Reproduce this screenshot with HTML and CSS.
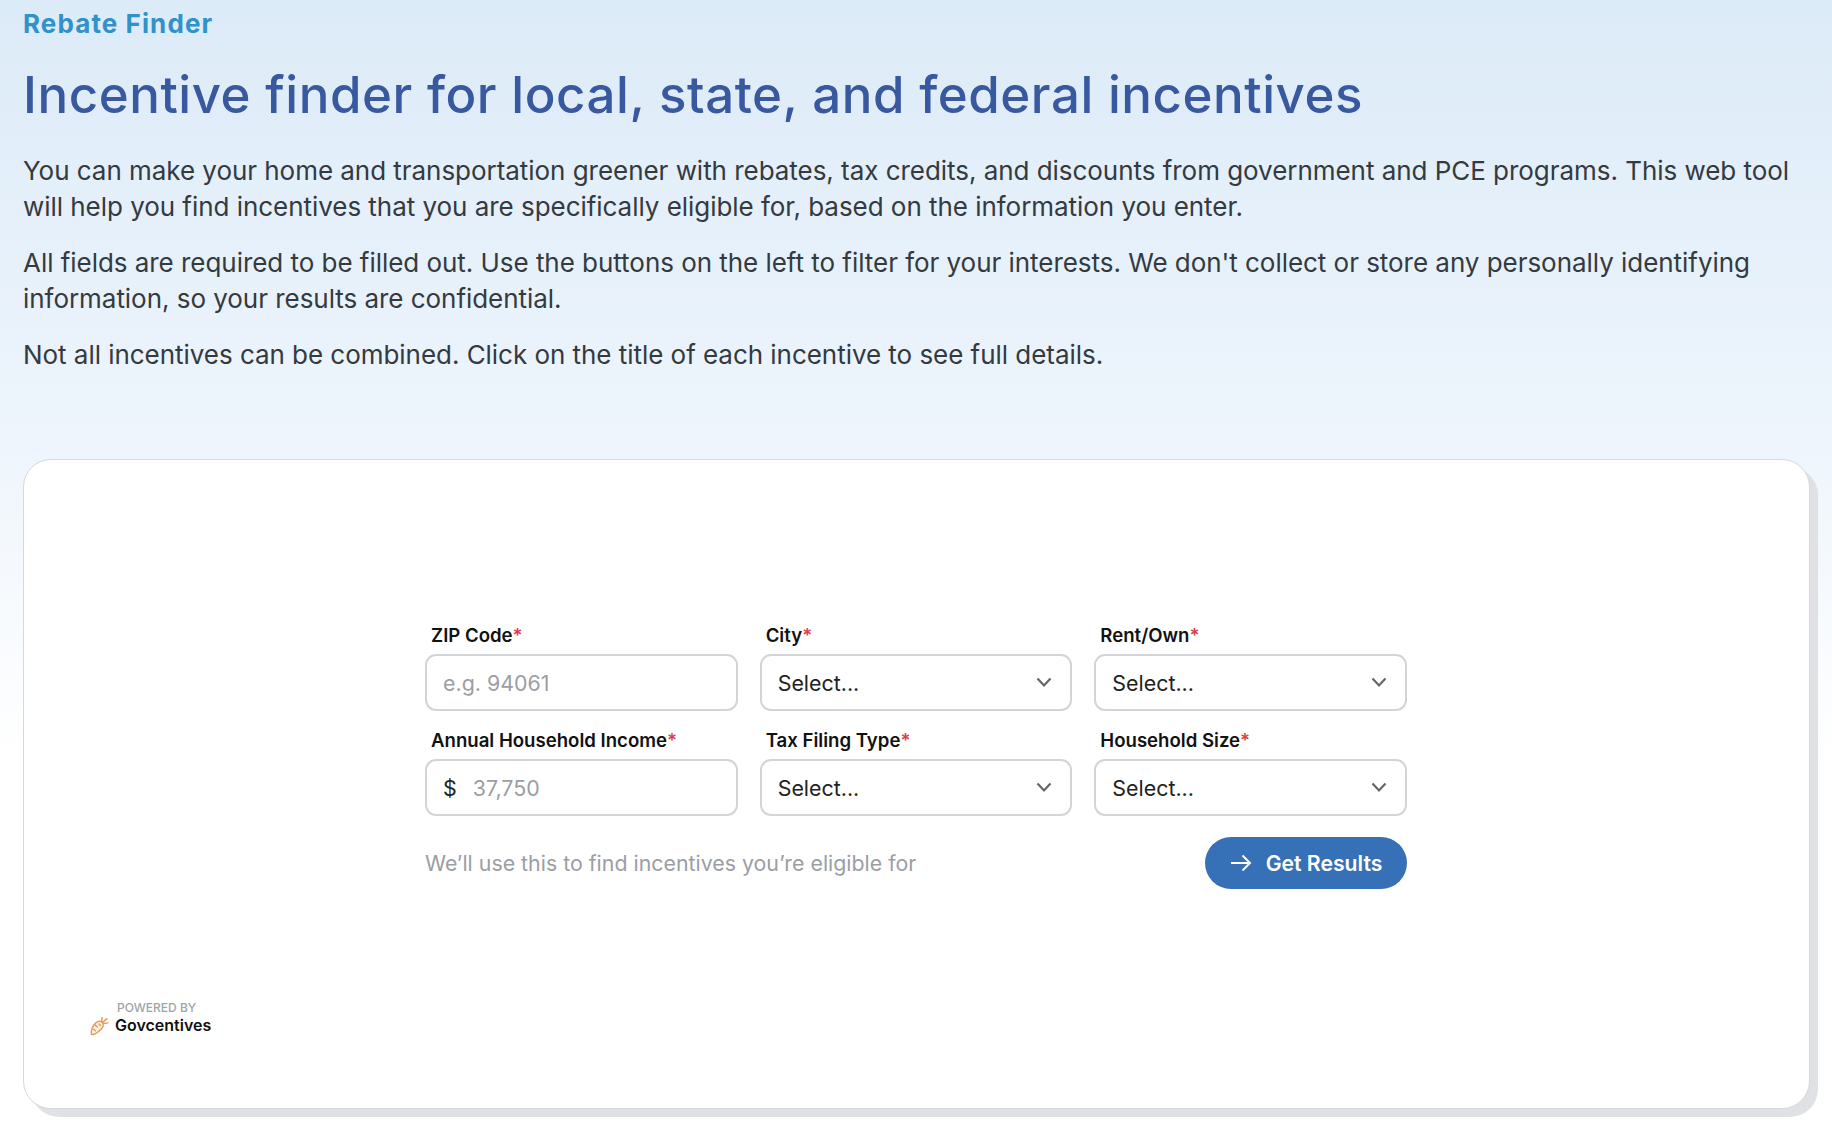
FILE: index.html
```html
<!DOCTYPE html>
<html lang="en">
<head>
<meta charset="utf-8">
<title>Rebate Finder</title>
<link rel="stylesheet" href="styles.css">
</head>
<body>
<header class="intro">
  <div class="brand">Rebate Finder</div>
  <h1 class="title">Incentive finder for local, state, and federal incentives</h1>
  <p class="copy">You can make your home and transportation greener with rebates, tax credits, and discounts from government and PCE programs. This web tool will help you find incentives that you are specifically eligible for, based on the information you enter.</p>
  <p class="copy">All fields are required to be filled out. Use the buttons on the left to filter for your interests. We don't collect or store any personally identifying information, so your results are confidential.</p>
  <p class="copy">Not all incentives can be combined. Click on the title of each incentive to see full details.</p>
</header>
<main class="card">
  <div class="form-area">
    <form class="form">
      <div class="fields">
        <div class="field">
          <div class="label">ZIP Code<span class="req">*</span></div>
          <div class="control"><span class="placeholder">e.g. 94061</span></div>
        </div>
        <div class="field">
          <div class="label">City<span class="req">*</span></div>
          <div class="control select"><span>Select...</span><svg class="chev" viewBox="0 0 16 11"><path d="M1.500 1.500 8 8.500l6.500-7"/></svg></div>
        </div>
        <div class="field">
          <div class="label">Rent/Own<span class="req">*</span></div>
          <div class="control select"><span>Select...</span><svg class="chev" viewBox="0 0 16 11"><path d="M1.500 1.500 8 8.500l6.500-7"/></svg></div>
        </div>
        <div class="field">
          <div class="label">Annual Household Income<span class="req">*</span></div>
          <div class="control"><span class="dollar">$</span><span class="placeholder">37,750</span></div>
        </div>
        <div class="field">
          <div class="label">Tax Filing Type<span class="req">*</span></div>
          <div class="control select"><span>Select...</span><svg class="chev" viewBox="0 0 16 11"><path d="M1.500 1.500 8 8.500l6.500-7"/></svg></div>
        </div>
        <div class="field">
          <div class="label">Household Size<span class="req">*</span></div>
          <div class="control select"><span>Select...</span><svg class="chev" viewBox="0 0 16 11"><path d="M1.500 1.500 8 8.500l6.500-7"/></svg></div>
        </div>
      </div>
      <div class="actions">
        <span class="hint">We’ll use this to find incentives you’re eligible for</span>
        <button class="submit" type="button">
          <svg class="arrow" viewBox="0 0 22 18"><path d="M1 9h19M12.500 1.500 20 9l-7.500 7.500"/></svg>
          Get Results
        </button>
      </div>
    </form>
  </div>
  <div class="powered">
    <svg class="carrot" viewBox="0 0 20 20"><path d="M2.500 18.500C1.500 15 3.500 10 6.500 7.500 8.500 6 11 5.500 12.500 7c1.500 1.500 1.500 4-.5 6-2.500 2.500-6.500 6-9.500 5.500Z"/><path d="M12 6l.5-3.500M13 7l4-3.500M14 8l4-.5M6 9.500l2 2M4.500 13.500 6 15M9.500 8.500 11 10"/></svg>
    <div class="powered-text">
      <div class="powered-by">POWERED BY</div>
      <div class="powered-name">Govcentives</div>
    </div>
  </div>
</main>
</body>
</html>
```
FILE: styles.css
```css
* { box-sizing: border-box; }
html, body { height: 100%; }
body {
  margin: 0;
  height: 1135px;
  overflow: hidden;
  font-family: Inter, "Liberation Sans", sans-serif;
  background: linear-gradient(180deg, #dcebf8 0, #eef5fc 440px, #ffffff 760px);
  display: flex;
  flex-direction: column;
}
.intro { padding: 9px 23px 0; height: 459px; }
.brand {
  font-size: 26px;
  line-height: 30px;
  font-weight: 700;
  color: #3191c9;
  letter-spacing: 1.1px;
}
.title {
  margin: 26px 0 28px;
  font-size: 51px;
  line-height: 60px;
  font-weight: 450;
  color: #38589f;
  letter-spacing: 0.55px;
}
.copy {
  margin: 0 0 20px;
  font-size: 26px;
  line-height: 36px;
  color: #343a40;
  letter-spacing: -0.04px;
}
.card {
  margin: 0 0 0 23px;
  width: 1787px;
  height: 650px;
  background: #fff;
  border: 1px solid #d5d8dc;
  border-radius: 28px;
  box-shadow: 8px 8px 0 #dfe1e4;
  display: flex;
  flex-direction: column;
  padding-bottom: 72px;
}
.form-area {
  flex: 1;
  display: flex;
  justify-content: center;
  padding-top: 164px;
  padding-right: 1px;
}
.form { width: 982px; }
.fields {
  display: grid;
  grid-template-columns: repeat(3, 1fr);
  column-gap: 22px;
  row-gap: 18px;
}
.label {
  padding-left: 6px;
  font-size: 18.6px;
  line-height: 22px;
  font-weight: 600;
  color: #111;
  margin-bottom: 8px;
  white-space: nowrap;
}
.req { color: #d9414f; }
.control {
  height: 57px;
  border: 2px solid #d2d4d7;
  border-radius: 11px;
  background: #fff;
  padding: 0 16px;
  display: flex;
  align-items: center;
  font-size: 21.4px;
  color: #222;
}
.select { justify-content: space-between; }
.placeholder { color: #9b9ea3; }
.dollar { color: #222; margin-right: 16px; }
.chev { width: 16px; height: 11px; fill: none; stroke: #666; stroke-width: 2.200; margin-right: 2px; }
.actions {
  display: flex;
  align-items: center;
  justify-content: space-between;
  margin-top: 21px;
}
.hint { font-size: 21.350px; color: #9b9ea3; }
.submit {
  width: 202px;
  height: 52px;
  border: 0;
  border-radius: 26px;
  background: #3671b8;
  color: #fff;
  font: 600 21.200px Inter, "Liberation Sans", sans-serif;
  display: flex;
  align-items: center;
  justify-content: center;
  gap: 14px;
  padding: 0;
}
.arrow { width: 22px; height: 18px; fill: none; stroke: #fff; stroke-width: 2; }
.powered {
  display: flex;
  align-items: flex-end;
  gap: 5px;
  padding-left: 65px;
}
.carrot { width: 21px; height: 21px; fill: #fdf3e9; stroke: #e89a56; stroke-width: 1.400; stroke-linecap: round; stroke-linejoin: round; }
.powered-by { font-size: 12px; line-height: 15px; color: #a0a3a7; font-weight: 500; padding-left: 2px; }
.powered-name { font-size: 16px; line-height: 21px; font-weight: 600; color: #111; }
```
